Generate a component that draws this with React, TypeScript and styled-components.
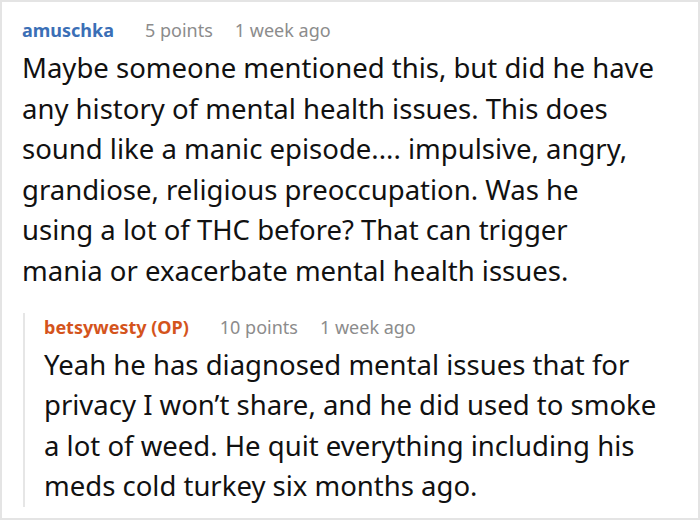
import React from 'react'
import styled, { createGlobalStyle } from 'styled-components'

const Global = createGlobalStyle`
    html, body {
        margin: 0;
        padding: 0;
        background: #fff;
    }
    body {
        font-family: "Noto Sans", "Open Sans", sans-serif;
    }
`

const Frame = styled.div`
    box-sizing: border-box;
    width: 700px;
    height: 520px;
    border: 2px solid #e4e4e4;
    padding: 14px 20px 0 20px;
    overflow: hidden;
`

const Meta = styled.div`
    display: flex;
    align-items: baseline;
    font-size: 18px;
    line-height: 28px;
    color: #8c8c8c;
`

const Author = styled.span<{ $op?: boolean }>`
    font-weight: 700;
    color: ${p => (p.$op ? '#d4541c' : '#3b6fb6')};
    margin-right: 31px;
`

const Points = styled.span`
    margin-right: 22px;
`

const Body = styled.p`
    margin: 4px 0 0;
    font-size: 27.5px;
    line-height: 40.6px;
    color: #111;
`

const Reply = styled.div`
    margin: 21px 0 0 1px;
    border-left: 2px solid #e6e6e6;
    padding-left: 19px;
`

export default function App() {
    return (
        <>
            <Global />
            <Frame>
                <Meta>
                    <Author>amuschka</Author>
                    <Points>5 points</Points>
                    <span>1 week ago</span>
                </Meta>
                <Body>
                    Maybe someone mentioned this, but did he have<br />
                    any history of mental health issues. This does<br />
                    sound like a manic episode.... impulsive, angry,<br />
                    grandiose, religious preoccupation. Was he<br />
                    using a lot of THC before? That can trigger<br />
                    mania or exacerbate mental health issues.
                </Body>
                <Reply>
                    <Meta>
                        <Author $op>betsywesty (OP)</Author>
                        <Points>10 points</Points>
                        <span>1 week ago</span>
                    </Meta>
                    <Body>
                        Yeah he has diagnosed mental issues that for<br />
                        privacy I won’t share, and he did used to smoke<br />
                        a lot of weed. He quit everything including his<br />
                        meds cold turkey six months ago.
                    </Body>
                </Reply>
            </Frame>
        </>
    )
}
